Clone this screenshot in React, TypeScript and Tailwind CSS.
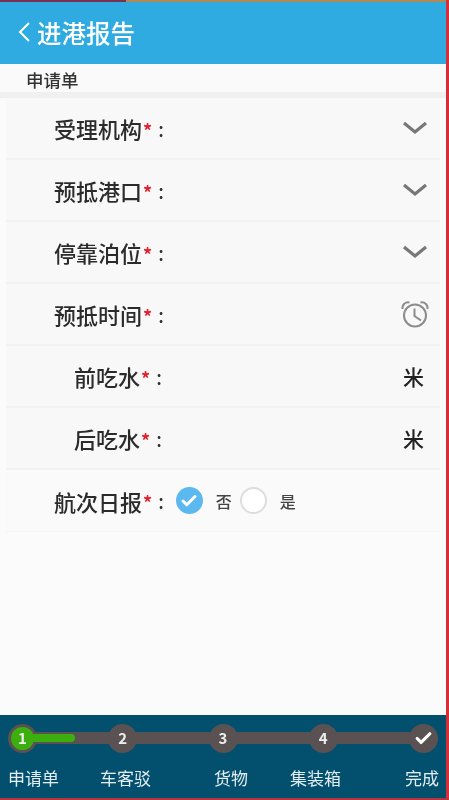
import { Check } from 'lucide-react';
import type { ReactNode } from 'react';

const font = "font-['Noto_Sans_CJK_SC','Noto_Sans',sans-serif]";

function Arrow() {
  return (
    <svg width="26" height="14" viewBox="0 0 26 14" fill="none" stroke="#777" strokeWidth="3.2" className="mr-[1px]">
      <path d="M2 2 L13 11 L24 2" />
    </svg>
  );
}

function Alarm() {
  return (
    <svg width="28" height="28" viewBox="0 0 28 28" fill="none" stroke="#8c8c8c" strokeWidth="2" className="mt-[-1px]">
      <circle cx="14" cy="15.5" r="11" />
      <path d="M13.500 8.500 V16 L20 20.500" />
      <path d="M1.500 9 C1 4.500 4.500 1.500 8.500 2.500" />
      <path d="M26.500 9 C27 4.500 23.500 1.500 19.500 2.500" />
    </svg>
  );
}

function Label({ text }: { text: string }) {
  return (
    <>
      <span className="text-[22px] font-medium leading-none text-[#2b2b2b]">{text}</span>
      <span className="ml-px mt-[3px] text-[18px] font-bold leading-none text-[#e0202c]">*</span>
      <span className="ml-[6px] text-[19px] font-medium leading-none text-[#333]">:</span>
    </>
  );
}

function Row({ label, indent = 'pl-[48px]', children }: { label: string; indent?: string; children?: ReactNode }) {
  return (
    <div className={`flex h-[62px] items-center border-b-2 border-[#f2f2f2] bg-[#f8f8f8] pr-[11px] ${indent}`}>
      <Label text={label} />
      <div className="ml-auto flex items-center">{children}</div>
    </div>
  );
}

const steps = [
  { n: '1', active: true },
  { n: '2' },
  { n: '3' },
  { n: '4' },
  { n: 'check' },
];

function Stepper() {
  return (
    <div className="relative mx-[8px] flex h-[46px] items-center justify-between">
      <div className="absolute inset-x-[6px] top-[17px] h-[12px] bg-[#5a5252]" />
      {steps.map((s) => (
        <div
          key={s.n}
          className="relative flex h-[29px] w-[29px] items-center justify-center rounded-full bg-[#5a5252] text-[15px] font-bold text-[#eee]"
        >
          {s.active ? (
            <div className="relative z-10 flex h-[23px] w-[23px] items-center justify-center rounded-full bg-[#3cae0e]">{s.n}</div>
          ) : s.n === 'check' ? (
            <Check size={19} strokeWidth={4} className="text-white" />
          ) : (
            s.n
          )}
        </div>
      ))}
      <div className="absolute left-[22px] top-[19px] h-[8px] w-[45px] rounded-full bg-[#3cae0e]" />
    </div>
  );
}

export default function App() {
  return (
    <div className={`relative flex h-[800px] w-[449px] flex-col overflow-hidden border-r-[3px] border-b-2 border-r-[#d5303a] border-b-[#b8343e] bg-[#fbfbfb] blur-[0.4px] ${font}`}>
      <div className="flex h-[2px] shrink-0">
        <div className="w-[126px] bg-[#7a2f55]" />
        <div className="flex-1 bg-[#b08a55]" />
      </div>
      <header className="flex h-[62px] shrink-0 items-center bg-[#2fabe2] pl-[18px] text-white">
        <svg width="13" height="22" viewBox="0 0 13 22" fill="none" stroke="#fff" strokeWidth="2" className="mr-[6px] mt-[-2px]">
          <path d="M11 2 L2 11 L11 20" />
        </svg>
        <h1 className="text-[24.5px] font-medium leading-none">进港报告</h1>
      </header>
      <div className="flex h-[34px] shrink-0 items-center border-b-[6px] border-[#f0f0f0] bg-[#fafafa] pl-[26px] pt-[3px] text-[17.5px] font-medium leading-none text-[#333]">
        申请单
      </div>
      <div className="mx-[6px] flex flex-col">
        <Row label="受理机构">
          <Arrow />
        </Row>
        <Row label="预抵港口">
          <Arrow />
        </Row>
        <Row label="停靠泊位">
          <Arrow />
        </Row>
        <Row label="预抵时间">
          <Alarm />
        </Row>
        <Row label="前吃水" indent="pl-[68px]">
          <span className="pr-[5px] text-[21px] font-medium leading-none text-[#222]">米</span>
        </Row>
        <Row label="后吃水" indent="pl-[68px]">
          <span className="pr-[5px] text-[21px] font-medium leading-none text-[#222]">米</span>
        </Row>
        <div className="flex h-[62px] items-center border-b border-[#f3f3f3] bg-[#fafafa] pl-[48px]">
          <Label text="航次日报" />
          <div className="ml-[12px] flex h-[27px] w-[27px] items-center justify-center rounded-full bg-[#5bb9f0]">
            <Check size={18} strokeWidth={4} className="text-white" />
          </div>
          <span className="ml-[13px] text-[16px] font-medium leading-none text-[#444]">否</span>
          <div className="ml-[8px] h-[27px] w-[27px] rounded-full border-2 border-[#ddd] bg-white" />
          <span className="ml-[13px] text-[16px] font-medium leading-none text-[#444]">是</span>
        </div>
      </div>
      <footer className="mt-auto h-[83px] shrink-0 bg-[#034f6e]">
        <Stepper />
        <div className="mt-[8px] flex pl-[8px] text-[17px] leading-none text-[#e4eef2]">
          <span>申请单</span>
          <span className="ml-[41px]">车客驳</span>
          <span className="ml-[63px]">货物</span>
          <span className="ml-[42px]">集装箱</span>
          <span className="ml-[64px]">完成</span>
        </div>
      </footer>
    </div>
  );
}
